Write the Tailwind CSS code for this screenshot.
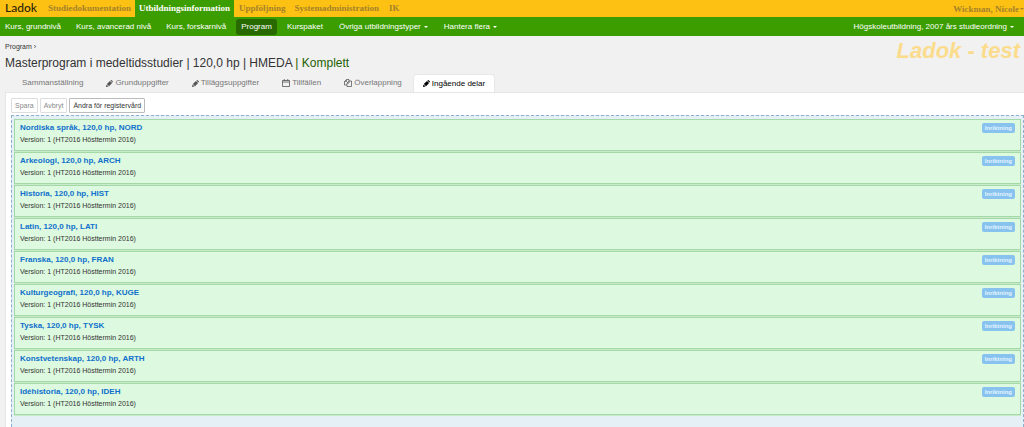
<!DOCTYPE html>
<html lang="sv">
<head>
<meta charset="utf-8">
<title>Ladok</title>
<script src="https://cdn.jsdelivr.net/npm/@tailwindcss/browser@4"></script>
</head>
<body class="flex min-h-screen flex-col overflow-x-hidden bg-[#f1f1f1] font-['Liberation_Sans',Arial,sans-serif] text-[8px] leading-3 text-[#333]">
<svg class="hidden">
  <symbol id="pencil" viewBox="0 0 16 16"><path fill="currentColor" d="M0 16l1-6 5 5zM2 9l7-7 5 5-7 7zM10 1l1-.7q1-.6 2 0l2.500 2.500q.8 1 0 2l-.8 1z"/></symbol>
  <symbol id="calendar" viewBox="0 0 16 16"><path fill="none" stroke="currentColor" stroke-width="1.600" d="M1 3h14v12H1zM1 6h14M4.500 0v4M11.500 0v4"/></symbol>
  <symbol id="copy" viewBox="0 0 16 16"><path fill="none" stroke="currentColor" stroke-width="1.500" d="M6 12H1V5l4-4h5v3M5 1v4H1M10 4h5v11H6V8l4-4v4H6"/></symbol>
</svg>
<header>
  <div class="flex h-[17px] items-stretch bg-[#fdc114] font-['Liberation_Serif',serif] text-[9px] font-bold leading-4 text-[#a5812a]">
    <a href="#" class="w-[43px] pl-[5px] font-[Lato,sans-serif] text-[12px] font-medium text-[#2b2408]">Ladok</a>
    <nav class="flex">
      <a href="#" class="pr-1 pl-[5px]">Studiedokumentation</a>
      <a href="#" class="bg-[#3c9d00] px-1 text-white">Utbildningsinformation</a>
      <a href="#" class="pr-1 pl-[5px]">Uppföljning</a>
      <a href="#" class="px-[5px]">Systemadministration</a>
      <a href="#" class="px-[5px]">IK</a>
    </nav>
    <button class="ml-auto flex items-center gap-px whitespace-nowrap">Wickman, Nicole<span class="border-x-2 border-t-2 border-x-transparent border-t-current"></span></button>
  </div>
  <nav class="flex h-[19px] items-center bg-[#3c9d00] pr-[10px] pl-[5px] text-white">
    <a href="#" class="mr-[15px]">Kurs, grundnivå</a>
    <a href="#" class="mr-[15px]">Kurs, avancerad nivå</a>
    <a href="#" class="mr-[10px]">Kurs, forskarnivå</a>
    <a href="#" class="mr-[10px] rounded-[3px] bg-[#286a00] px-[5px] py-0.5">Program</a>
    <a href="#" class="mr-4">Kurspaket</a>
    <button class="mr-4 flex items-center gap-[3px]">Övriga utbildningstyper<span class="border-x-2 border-t-2 border-x-transparent border-t-current"></span></button>
    <button class="flex items-center gap-[3px]">Hantera flera<span class="border-x-2 border-t-2 border-x-transparent border-t-current"></span></button>
    <button class="ml-auto flex items-center gap-[3px]">Högskoleutbildning, 2007 års studieordning<span class="border-x-2 border-t-2 border-x-transparent border-t-current"></span></button>
  </nav>
</header>
<div class="flex justify-between pt-[3px] pr-1 pl-[5px]">
  <div>
    <nav class="pt-0.5 text-[7px]"><a href="#">Program ›</a></nav>
    <h1 class="mt-0.5 text-[12px] leading-4">Masterprogram i medeltidsstudier | 120,0 hp | HMEDA <span class="text-[#1f5f00]">| Komplett</span></h1>
  </div>
  <div class="text-[22px] font-bold italic leading-6 text-[#fbdc8c]">Ladok - test</div>
</div>
<nav class="mt-[3px] flex pl-[13px] text-[#777]">
  <a href="#" class="flex h-[18px] items-center px-[9px]">Sammanställning</a>
  <a href="#" class="ml-[5px] flex h-[18px] items-center gap-0.5 px-[9px]"><svg class="size-[7px] text-[#555]"><use href="#pencil"/></svg>Grunduppgifter</a>
  <a href="#" class="ml-[5px] flex h-[18px] items-center gap-0.5 px-[9px]"><svg class="size-[7px] text-[#555]"><use href="#pencil"/></svg>Tilläggsuppgifter</a>
  <a href="#" class="ml-[5px] flex h-[18px] items-center gap-0.5 px-[9px]"><svg class="size-2 text-[#555]"><use href="#calendar"/></svg>Tillfällen</a>
  <a href="#" class="ml-[5px] flex h-[18px] items-center gap-0.5 px-[9px]"><svg class="size-2 text-[#555]"><use href="#copy"/></svg>Överlappning</a>
  <a href="#" class="ml-[2px] flex h-[18px] items-center gap-0.5 rounded-t-sm border border-b-0 border-[#e8e8e8] bg-white px-[9px] text-black"><svg class="size-[7px]"><use href="#pencil"/></svg>Ingående delar</a>
</nav>
<main class="ml-[5px] flex grow flex-col border-t border-l border-[#e6e6e6] bg-white pt-[5px] pl-[5px]">
  <div class="flex gap-0.5 text-[7px]">
    <button class="h-[15px] rounded-[1px] border border-[#ddd] px-[3px] text-[#888]">Spara</button>
    <button class="h-[15px] rounded-[1px] border border-[#ddd] px-[3px] text-[#888]">Avbryt</button>
    <button class="h-[15px] rounded-[1px] border border-[#bbb] px-[3px] text-[#333]">Ändra för registervård</button>
  </div>
  <ul id="parts" class="mt-0.5 flex grow flex-col gap-px border border-b-0 border-dashed border-[#8fb0cc] bg-[#e4eff6] px-0.5 pt-[3px]"></ul>
</main>
<template id="part">
  <li class="flex h-8 items-start justify-between border border-[#a5d8a7] bg-[#ddf9df] px-[5px] pt-0.5 text-[7px] shadow-[0_1px_0_#c8eccb]">
    <div>
      <a href="#" class="block text-[8px] font-bold text-[#0f70cc]"></a>
      <p>Version: 1 (HT2016 Hösttermin 2016)</p>
    </div>
    <span class="mt-px rounded-[2px] bg-[#87c3ee] px-[3px] text-[6px] font-bold leading-[10px] text-[#e4f3ff]">Inriktning</span>
  </li>
</template>
<script>
const names = ["Nordiska språk, 120,0 hp, NORD", "Arkeologi, 120,0 hp, ARCH", "Historia, 120,0 hp, HIST", "Latin, 120,0 hp, LATI", "Franska, 120,0 hp, FRAN", "Kulturgeografi, 120,0 hp, KUGE", "Tyska, 120,0 hp, TYSK", "Konstvetenskap, 120,0 hp, ARTH", "Idéhistoria, 120,0 hp, IDEH"];
for (const n of names) {
  const row = document.getElementById("part").content.cloneNode(true);
  row.querySelector("a").textContent = n;
  document.getElementById("parts").append(row);
}
</script>
</body>
</html>
